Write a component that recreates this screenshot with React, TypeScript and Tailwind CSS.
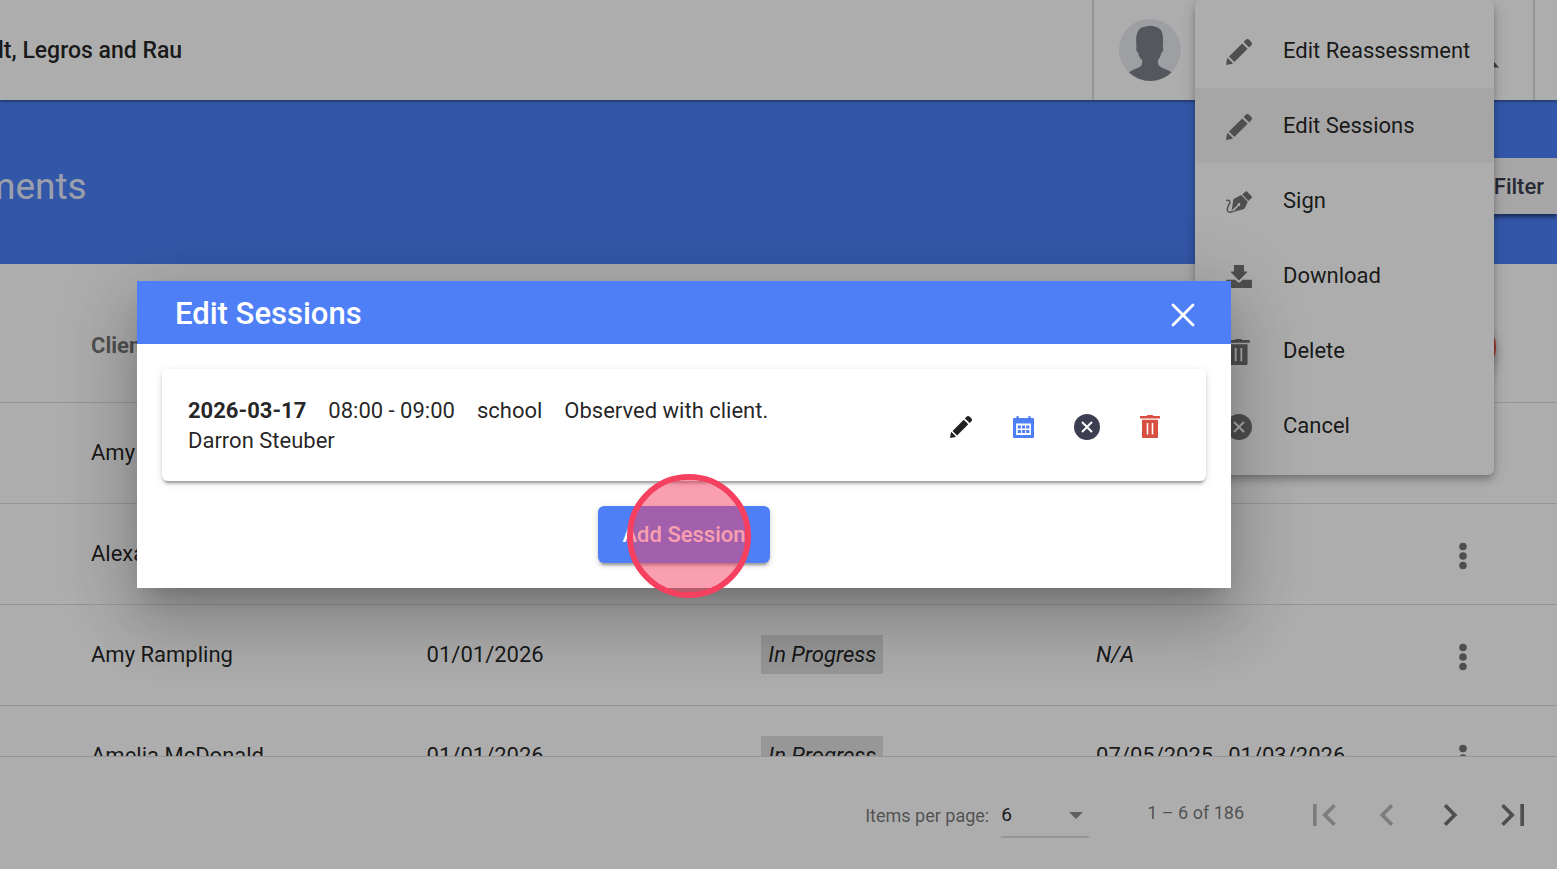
import React from "react";

type IconProps = { className?: string };

function PencilIcon({ className }: IconProps) {
  return (
    <svg viewBox="0 0 26 26" fill="currentColor" className={className} aria-hidden="true">
      <path d="M0 26 1.2 19.2Q1.6 18.9 2 19.2L6.7 24Q7 24.4 6.6 24.7Z" />
      <path d="M3 17.6 16.2 4.4 21.6 9.8 8.4 23Z" />
      <path d="M17.6 2.9 19.5 1Q21.400-.8 23.400 1L25.100 2.700Q26.900 4.700 25.100 6.500L23.200 8.400Z" />
    </svg>
  );
}

function PenNibIcon({ className }: IconProps) {
  return (
    <svg viewBox="0 0 26 22" className={className} aria-hidden="true">
      <path d="M.8 9.200C3.600 9.100 4.600 10.600 3.200 13.200 1.400 16.400.2 19.600 2.600 20.900 4 21.500 5.600 21.100 7 20.400" fill="none" stroke="currentColor" strokeWidth="1.500" strokeLinecap="round" />
      <path d="M5.600 19.600 7.200 9.200Q7.400 8 8.600 7.400L15.200 4 21.800 10.800 18.900 17Q18.500 18 17.400 18.300L7 20.900 12.600 14.900A1.400 1.400 0 1 0 11.600 14Z" fill="currentColor" />
      <path d="M16.300 3.400 19.900.3Q20.500-.1 21.100.5L25.800 5.600Q26.200 6.200 25.700 6.700L22.500 9.900Z" fill="currentColor" />
    </svg>
  );
}

function DownloadIcon({ className }: IconProps) {
  return (
    <svg viewBox="0 0 26 23" fill="currentColor" className={className} aria-hidden="true">
      <path d="M8.5 0h9q.5 0 .5.6V6.5h2.6q.9.1.3.9L13.6 14.9q-.6.6-1.2 0L5.1 7.4q-.6-.8.3-.9H8V.6Q8 0 8.500 0Z" />
      <path d="M1 14.800H9.300L11.600 17q1.400 1.200 2.800 0L16.700 14.800H25q1 0 1 1V22q0 1-1 1H1q-1 0-1-1V15.800q0-1 1-1Z" />
    </svg>
  );
}

function TrashIcon({ className }: IconProps) {
  return (
    <svg viewBox="0 0 20 23" fill="currentColor" className={className} aria-hidden="true">
      <path d="M.4.9H6.500Q7 0 8 0h4q1 0 1.500.9H19.600q.4 0 .4.5V3.400H0V1.400Q0 .9.4.9Z" />
      <path fillRule="evenodd" d="M2 4.700H18V22.200q0 .8-.8.8H2.800Q2 23 2 22.200ZM6.700 8V19.600H8.300V8ZM11.700 8V19.600h1.600V8Z" />
    </svg>
  );
}

function CancelIcon({ className }: IconProps) {
  return (
    <svg viewBox="0 0 26 26" className={className} aria-hidden="true">
      <path fill="currentColor" fillRule="evenodd" d="M13 0a13 13 0 1 0 0 26 13 13 0 0 0 0-26ZM8.700 7.300 13 11.600 17.300 7.300 18.700 8.700 14.400 13 18.700 17.300 17.300 18.700 13 14.400 8.700 18.700 7.300 17.300 11.600 13 7.300 8.700Z" />
    </svg>
  );
}

function CalendarIcon({ className }: IconProps) {
  return (
    <svg viewBox="0 0 22 23" fill="currentColor" className={className} aria-hidden="true">
      <path fillRule="evenodd" d="M1 2H3.500V1q0-1 1.300-1T6.100 1V2h9.800V1q0-1 1.300-1T18.500 1V2H21q1 0 1 1V22q0 1-1 1H1q-1 0-1-1V3Q0 2 1 2ZM3.200 7.800V19.800H18.800V7.800Z" />
      <path d="M5 10H8.300V13.200H5ZM9.400 10h3.300V13.200H9.400ZM13.800 10h3.300V13.200H13.800ZM5 14.600H8.300V17.800H5ZM9.400 14.600h3.300V17.800H9.400ZM13.800 14.600h3.300V17.800H13.800Z" />
    </svg>
  );
}

function DotsIcon() {
  return (
    <svg viewBox="0 0 8 28" fill="currentColor" className="h-7 w-2" aria-hidden="true">
      <circle cx="4" cy="4.500" r="3.800" />
      <circle cx="4" cy="14" r="3.800" />
      <circle cx="4" cy="23.500" r="3.800" />
    </svg>
  );
}

const menuItems = [
  { label: "Edit Reassessment", icon: <PencilIcon className="h-[26px] w-[26px]" /> },
  { label: "Edit Sessions", icon: <PencilIcon className="h-[26px] w-[26px]" />, active: true },
  { label: "Sign", icon: <PenNibIcon className="h-[22px] w-[26px]" /> },
  { label: "Download", icon: <DownloadIcon className="h-[23px] w-[26px]" /> },
  { label: "Delete", icon: <TrashIcon className="h-[26px] w-[23px]" /> },
  { label: "Cancel", icon: <CancelIcon className="h-[26px] w-[26px]" /> },
];

const rows = [
  { client: "Amy", date: "", status: "", period: [] },
  { client: "Alexa", date: "", status: "", period: [] },
  { client: "Amy Rampling", date: "01/01/2026", status: "In Progress", period: ["N/A"] },
  { client: "Amelia McDonald", date: "01/01/2026", status: "In Progress", period: ["07/05/2025", "01/03/2026"] },
];

const pagerButtons = [
  { label: "First page", disabled: true, d: "M18.41 16.59L13.82 12l4.59-4.59L17 6l-6 6 6 6zM6 6h2v12H6z" },
  { label: "Previous page", disabled: true, d: "M15.41 7.41L14 6l-6 6 6 6 1.41-1.41L10.83 12z" },
  { label: "Next page", disabled: false, d: "M10 6L8.59 7.41 13.17 12l-4.58 4.59L10 18l6-6z" },
  { label: "Last page", disabled: false, d: "M5.59 7.41L10.18 12l-4.59 4.59L7 18l6-6-6-6zM16 6h2v12h-2z" },
];

function Header() {
  return (
    <header className="relative z-10 flex h-[100px] shrink-0 items-center justify-between bg-white shadow-[0_1px_3px_rgba(0,0,0,0.5)]">
      <div className="-ml-0.5 pt-0.5 text-[23px] font-medium">lt, Legros and Rau</div>
      <div className="flex h-full">
        <div className="flex w-[443px] items-center justify-between border-x-2 border-[#dedede] pr-[34px] pl-[25px]">
          <svg viewBox="0 0 62 62" className="h-[62px] w-[62px]" role="img" aria-label="User avatar">
            <circle cx="31" cy="31" r="31" fill="#e9eaf1" />
            <path fill="#7d828b" d="M10 53.500C14 49.500 21 49.500 23 45.500L23.200 41C20.800 39.500 19.600 37 19.300 33.800 17.200 33 16.800 29 17.500 27.500 16.500 18 17 8 27 7.500 32 5.500 38 8 41 10 44.500 13.500 44.500 21 43.700 27.500 45 29 44.200 33 42.200 34 41.700 37 40.700 39.500 38.800 41L39.200 45.500C41.500 49.500 48.500 50 52.500 53.500A31 31 0 0 1 10 53.500Z" />
          </svg>
          <svg viewBox="0 0 18 18" className="mt-5 h-[18px] w-[18px]" aria-hidden="true">
            <path d="M9 6 18 16.500H0Z" fill="#5c5c5c" />
          </svg>
        </div>
        <div className="w-[22px]" />
      </div>
    </header>
  );
}

function Hero() {
  return (
    <section className="flex h-[164px] shrink-0 items-center justify-between bg-[#4c81f8]">
      <h1 className="-ml-[17px] pt-2.5 text-[37px] leading-[44px] text-white/87">ments</h1>
      <button
        type="button"
        className="mt-2 h-14 rounded-l-md bg-[#f5f5f5] pr-[13px] pl-16 text-[22px] font-medium text-[#3b3f51] shadow-[0_3px_4px_rgba(0,0,0,0.5)]"
      >
        Filter
      </button>
    </section>
  );
}

function ClientTable() {
  return (
    <main className="min-h-0 flex-1 overflow-hidden">
      <table className="w-full table-fixed border-collapse text-left text-[22px] leading-[30px]">
        <colgroup>
          <col className="w-[27.4%]" />
          <col className="w-[21.5%]" />
          <col className="w-[21.5%]" />
          <col className="w-[21.5%]" />
          <col />
        </colgroup>
        <thead>
          <tr className="h-[138px] border-b border-[#dedede]">
            <th scope="col" className="pt-[26px] pl-[91px] font-bold text-black/55">Client</th>
            <td />
            <td />
            <td />
            <td className="pt-7">
              <button
                type="button"
                aria-label="Add"
                className="ml-[3px] flex h-[62px] w-[62px] items-center justify-center rounded-full bg-[#e54b3c] text-white shadow-[0_5px_8px_rgba(0,0,0,0.2),0_9px_16px_rgba(0,0,0,0.14)]"
              />
            </td>
          </tr>
        </thead>
        <tbody>
          {rows.map((row) => (
            <tr key={row.client} className="h-[101px] border-b border-[#dedede]">
              <td className="pl-[91px]">{row.client}</td>
              <td>{row.date}</td>
              <td>
                {row.status && (
                  <span className="inline-block bg-[#dfdfdf] px-[7px] py-1 leading-[31px] italic">{row.status}</span>
                )}
              </td>
              <td className={row.period.length === 1 ? "italic" : "whitespace-nowrap"}>
                <div className="flex gap-[15px]">
                  {row.period.map((day) => (
                    <span key={day}>{day}</span>
                  ))}
                </div>
              </td>
              <td>
                <button type="button" aria-label={`Actions for ${row.client}`} className="flex w-16 justify-center pt-1 text-[#757575]">
                  <DotsIcon />
                </button>
              </td>
            </tr>
          ))}
        </tbody>
      </table>
    </main>
  );
}

function Pager() {
  return (
    <footer className="flex h-[113px] shrink-0 items-center justify-end border-t border-[#dedede] pr-[13px] text-[18px] text-black/55">
      <label htmlFor="page-size" className="pt-1">Items per page:</label>
      <div className="relative mt-[5px] ml-3 w-[88px] border-b-2 border-[#dedede]">
        <select id="page-size" defaultValue="6" className="h-[42px] w-full appearance-none bg-transparent pt-0.5 text-[19px] text-black/87">
          <option value="6">6</option>
        </select>
        <svg viewBox="0 0 16 8" className="pointer-events-none absolute top-[18px] right-[5px] h-2 w-4" aria-hidden="true">
          <path d="M1 0H15L8 7Z" fill="#8c8c8c" />
        </svg>
      </div>
      <span className="mr-12 ml-[58px] pb-0.5">1 – 6 of 186</span>
      <nav className="flex" aria-label="Pagination">
        {pagerButtons.map((b) => (
          <button
            key={b.label}
            type="button"
            aria-label={b.label}
            disabled={b.disabled}
            className="flex h-[62px] w-[63px] items-center justify-center text-[#757575] disabled:opacity-50"
          >
            <svg viewBox="0 0 24 24" fill="currentColor" className="mt-1 h-11 w-11" aria-hidden="true">
              <path d={b.d} />
            </svg>
          </button>
        ))}
      </nav>
    </footer>
  );
}

function ActionsMenu() {
  return (
    <div
      role="menu"
      className="absolute top-0 right-[63px] z-20 w-[299px] rounded-md bg-white pt-[13px] pb-3 shadow-[0_3px_6px_-2px_rgba(0,0,0,0.2),0_6px_8px_rgba(0,0,0,0.14),0_2px_16px_rgba(0,0,0,0.12)]"
    >
      {menuItems.map((item) => (
        <button
          key={item.label}
          type="button"
          role="menuitem"
          className={
            item.active
              ? "flex h-[75px] w-full items-center bg-[#f5f5f5] pl-6 text-left"
              : "flex h-[75px] w-full items-center pl-6 text-left"
          }
        >
          <span className="mr-[25px] flex w-[39px] justify-center pt-0.5 text-[#757575]">{item.icon}</span>
          <span className="text-[22px] whitespace-nowrap">{item.label}</span>
        </button>
      ))}
    </div>
  );
}

function SessionsDialog() {
  return (
    <div className="absolute inset-0 z-30 flex items-center bg-black/32 pr-[326px] pl-[137px]">
      <div
        role="dialog"
        aria-labelledby="dialog-title"
        className="flex-1 bg-white shadow-[0_17px_23px_-11px_rgba(0,0,0,0.2),0_37px_59px_5px_rgba(0,0,0,0.14),0_14px_72px_12px_rgba(0,0,0,0.12)]"
      >
        <div className="flex h-[63px] items-center justify-between bg-[#4f7ff6] pr-9 pl-[38px] text-white">
          <h2 id="dialog-title" className="pt-1 text-[31px] font-medium">Edit Sessions</h2>
          <button type="button" aria-label="Close" className="pt-1">
            <svg viewBox="0 0 24 24" className="h-6 w-6" fill="none" stroke="currentColor" strokeWidth="2.800" strokeLinecap="round" aria-hidden="true">
              <path d="M2 2 22 22M22 2 2 22" />
            </svg>
          </button>
        </div>
        <div className="flex flex-col items-center gap-[25px] p-[25px]">
          <div className="flex h-28 w-full items-center justify-between rounded-md bg-white pr-[25px] pl-[26px] shadow-[0_5px_2px_-3px_rgba(0,0,0,0.2),0_3px_3px_rgba(0,0,0,0.14),0_2px_8px_rgba(0,0,0,0.12)]">
            <div className="pt-0.5 text-[22px] leading-[30px]">
              <div className="flex gap-[22px]">
                <strong className="font-bold">2026-03-17</strong>
                <span>08:00 - 09:00</span>
                <span>school</span>
                <span>Observed with client.</span>
              </div>
              <div>Darron Steuber</div>
            </div>
            <div className="flex pt-[3px]">
              <button type="button" aria-label="Edit" className="flex h-[62px] w-[63px] items-center justify-center">
                <PencilIcon className="h-[22px] w-[22px]" />
              </button>
              <button type="button" aria-label="Calendar" className="flex h-[62px] w-[63px] items-center justify-center text-[#4f7ff6]">
                <CalendarIcon className="h-[22px] w-[21px]" />
              </button>
              <button type="button" aria-label="Cancel session" className="flex h-[62px] w-[63px] items-center justify-center text-[#3b3f51]">
                <CancelIcon className="h-[26px] w-[26px]" />
              </button>
              <button type="button" aria-label="Delete" className="flex h-[62px] w-[63px] items-center justify-center text-[#d84f40]">
                <TrashIcon className="h-[23px] w-5" />
              </button>
            </div>
          </div>
          <div className="relative">
            <button
              type="button"
              className="block h-[57px] rounded-md bg-[#4f7ff6] px-[25px] text-[22px] font-medium text-white shadow-[0_5px_2px_-3px_rgba(0,0,0,0.2),0_3px_3px_rgba(0,0,0,0.14),0_2px_8px_rgba(0,0,0,0.12)]"
            >
              Add Session
            </button>
            <span className="pointer-events-none absolute -top-8 left-[29px] h-[124px] w-[124px] rounded-full border-[6px] border-[#f5405f] bg-[#f5405f]/50 bg-clip-padding" />
          </div>
        </div>
      </div>
    </div>
  );
}

export default function App() {
  return (
    <div className="relative flex h-screen flex-col overflow-hidden bg-white font-[Roboto,sans-serif] text-black/87">
      <Header />
      <Hero />
      <ClientTable />
      <Pager />
      <ActionsMenu />
      <SessionsDialog />
    </div>
  );
}
